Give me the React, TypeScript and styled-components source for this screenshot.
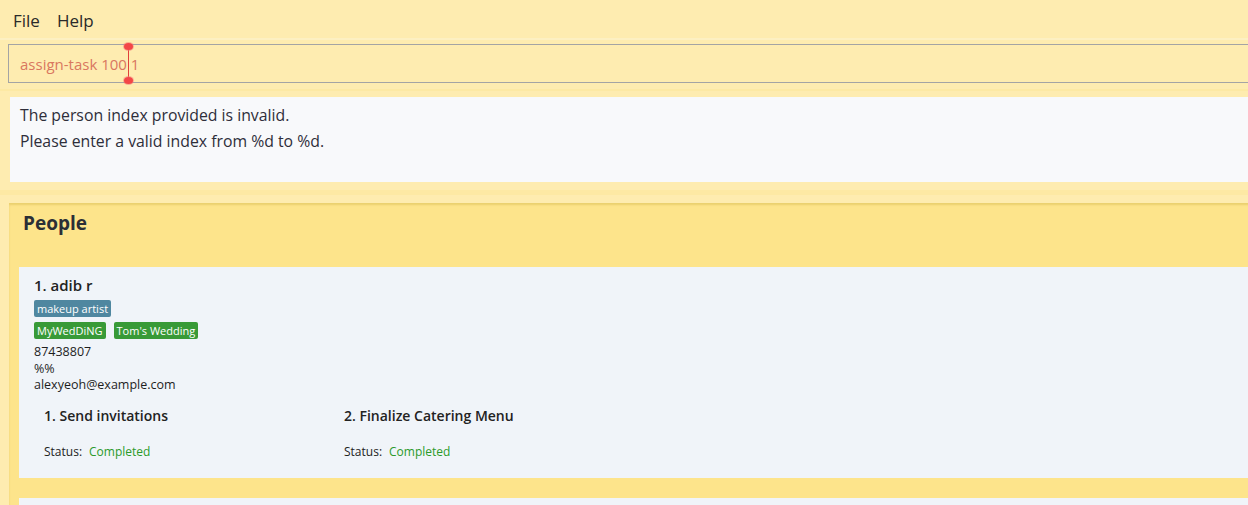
import React from "react";
import styled, { createGlobalStyle } from "styled-components";

const GlobalStyle = createGlobalStyle`
  html, body {
    margin: 0;
    padding: 0;
    overflow: hidden;
    background: #eef2f7;
  }
  body {
    font-family: "Open Sans", "Noto Sans", sans-serif;
    color: #222;
  }
`;

const Window = styled.div`
  width: 1290px;
  padding-top: 3px;
  background: #feecb0;
  min-height: 505px;
  display: flex;
  flex-direction: column;
`;

const MenuBar = styled.div`
  height: 35px;
  display: flex;
  align-items: center;
  gap: 17px;
  padding-left: 13px;
  font-size: 17px;
  color: #2a2a2a;
  background: #feecb0;
  border-bottom: 2px solid #fdf0c2;
`;

const MenuItem = styled.span`
  line-height: 1;
`;

const CommandArea = styled.div`
  padding: 4px 0 0 8px;
`;

const CommandBox = styled.div`
  position: relative;
  height: 37px;
  border: 1px solid #a4a4a4;
  border-right: none;
  display: flex;
  align-items: center;
  padding-left: 11px;
  font-size: 15px;
  color: #d9775f;
`;

const Caret = styled.span`
  position: absolute;
  left: 119px;
  top: 1px;
  bottom: 1px;
  width: 1px;
  background: #e0413a;
  &::before,
  &::after {
    content: "";
    position: absolute;
    left: -4px;
    width: 9px;
    height: 7px;
    border-radius: 50%;
    background: #f34747;
    box-shadow: 0 0 0 1px rgba(245, 120, 120, 0.5);
  }
  &::before {
    top: -3px;
  }
  &::after {
    bottom: -3px;
  }
`;

const ResultArea = styled.div`
  padding: 6px 0 0 0;
`;

const ResultFrame = styled.div`
  padding: 6px 0 8px 10px;
  border-top: 2px solid #fde9a4;
  background: #feecb0;
`;

const ResultBox = styled.div`
  height: 85px;
  background: #f8f9fb;
  box-sizing: border-box;
  padding: 5px 0 0 10px;
  font-size: 15.8px;
  line-height: 26px;
  color: #2e2e3a;
`;

const Divider = styled.div`
  height: 13px;
  background: #feecb0;
  border-top: 5px solid #fde9a4;
  box-sizing: border-box;
`;

const PeoplePanel = styled.div`
  margin-left: 9px;
  flex: 1;
  background: #fde48b;
  box-shadow: inset 0 2px 2px rgba(200, 170, 60, 0.35);
  padding: 0 0 0 10px;
`;

const PanelTitle = styled.h2`
  margin: 0;
  height: 64px;
  box-sizing: border-box;
  padding: 7px 0 0 4px;
  font-size: 19px;
  font-weight: 700;
  color: #2b2f36;
`;

const Card = styled.div`
  background: #f0f4f9;
  padding: 8px 0 18px 15px;
  margin-bottom: 20px;
`;

const Name = styled.div`
  font-size: 15px;
  font-weight: 600;
  color: #222;
  margin-bottom: 5px;
`;

const TagRow = styled.div`
  display: flex;
  gap: 8px;
  margin-bottom: 5px;
`;

const Tag = styled.span<{ $tone: "blue" | "green" }>`
  display: inline-block;
  background: ${(p) => (p.$tone === "blue" ? "#4f87a0" : "#389a37")};
  color: #fff;
  font-size: 11px;
  line-height: 17px;
  padding: 0 3px;
  border-radius: 2px;
`;

const Detail = styled.div`
  font-size: 12.5px;
  line-height: 16.5px;
  color: #1e1e1e;
`;

const TaskGrid = styled.div`
  display: grid;
  grid-template-columns: 300px 300px;
  padding: 12px 0 0 10px;
`;

const Task = styled.div`
  display: flex;
  flex-direction: column;
  gap: 18px;
`;

const TaskTitle = styled.div`
  font-size: 14px;
  font-weight: 600;
  color: #222;
`;

const Status = styled.div`
  font-size: 12px;
  color: #222;
`;

const StatusValue = styled.span`
  color: #2b9a2b;
  margin-left: 7px;
`;

const NextCard = styled.div`
  background: #f0f4f9;
  height: 30px;
`;

const tasks = [
  { title: "1.  Send invitations", status: "Completed" },
  { title: "2.  Finalize Catering Menu", status: "Completed" },
];

export default function App() {
  return (
    <>
      <GlobalStyle />
      <Window>
        <MenuBar>
          <MenuItem>File</MenuItem>
          <MenuItem>Help</MenuItem>
        </MenuBar>
        <CommandArea>
          <CommandBox>
            assign-task 100 1
            <Caret />
          </CommandBox>
        </CommandArea>
        <ResultArea>
          <ResultFrame>
            <ResultBox>
              The person index provided is invalid.
              <br />
              Please enter a valid index from %d to %d.
            </ResultBox>
          </ResultFrame>
        </ResultArea>
        <Divider />
        <PeoplePanel>
          <PanelTitle>People</PanelTitle>
          <Card>
            <Name>1. adib r</Name>
            <TagRow>
              <Tag $tone="blue">makeup artist</Tag>
            </TagRow>
            <TagRow>
              <Tag $tone="green">MyWedDiNG</Tag>
              <Tag $tone="green">Tom's Wedding</Tag>
            </TagRow>
            <Detail>87438807</Detail>
            <Detail>%%</Detail>
            <Detail>alexyeoh@example.com</Detail>
            <TaskGrid>
              {tasks.map((t) => (
                <Task key={t.title}>
                  <TaskTitle>{t.title}</TaskTitle>
                  <Status>
                    Status:<StatusValue>{t.status}</StatusValue>
                  </Status>
                </Task>
              ))}
            </TaskGrid>
          </Card>
          <NextCard />
        </PeoplePanel>
      </Window>
    </>
  );
}
